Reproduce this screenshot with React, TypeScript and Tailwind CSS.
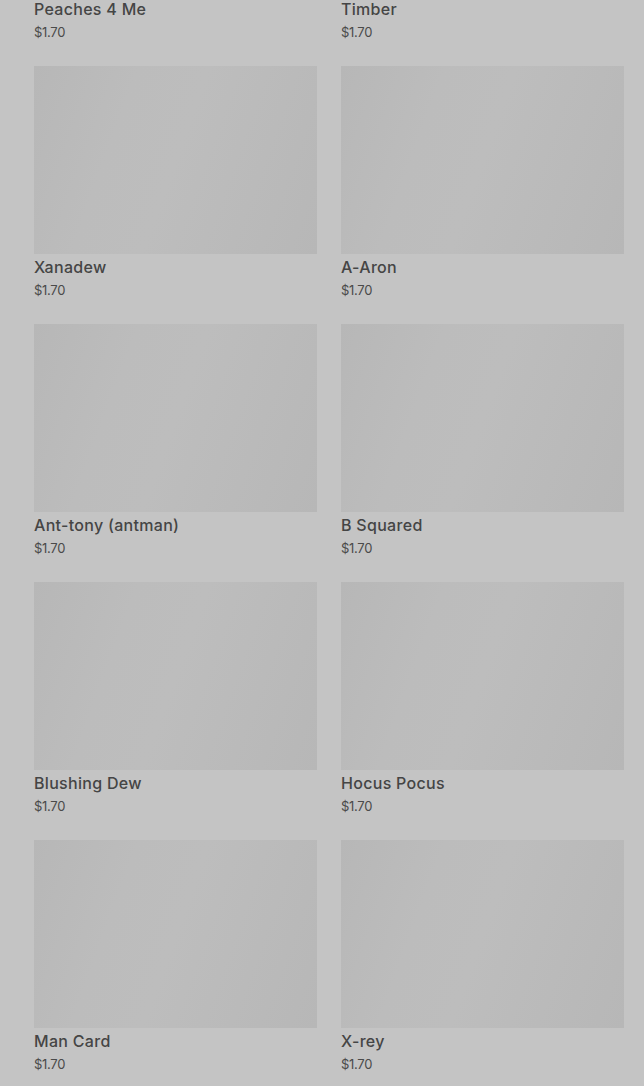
import React from "react";

const rows: [string, string][] = [
  ["Peaches 4 Me", "Timber"],
  ["Xanadew", "A-Aron"],
  ["Ant-tony (antman)", "B Squared"],
  ["Blushing Dew", "Hocus Pocus"],
  ["Man Card", "X-rey"],
];

function Card({ name }: { name: string }) {
  return (
    <div className="flex flex-col">
      <div className="h-[188px] w-full bg-[linear-gradient(110deg,#b7b7b7_0%,#bcbcbc_30%,#bdbdbd_50%,#bababa_75%,#b7b7b7_100%)]" />
      <div className="mt-[1px] text-[16px] leading-[24px] text-[#454545] font-medium tracking-[0.3px]">{name}</div>
      <div className="mt-[1px] text-[13px] leading-[20px] text-[#4a4a4a] tracking-[-0.3px]">$1.70</div>
    </div>
  );
}

export default function App() {
  return (
    <div className="w-[644px] h-[1086px] overflow-hidden bg-[#c4c4c4] font-['Inter',sans-serif]">
      <div className="mt-[-192px] pl-[34px] pr-[20px] grid grid-cols-2 gap-x-[24px] gap-y-[24px]">
        {rows.flatMap(([a, b]) => [
          <Card key={a} name={a} />,
          <Card key={b} name={b} />,
        ])}
      </div>
    </div>
  );
}
